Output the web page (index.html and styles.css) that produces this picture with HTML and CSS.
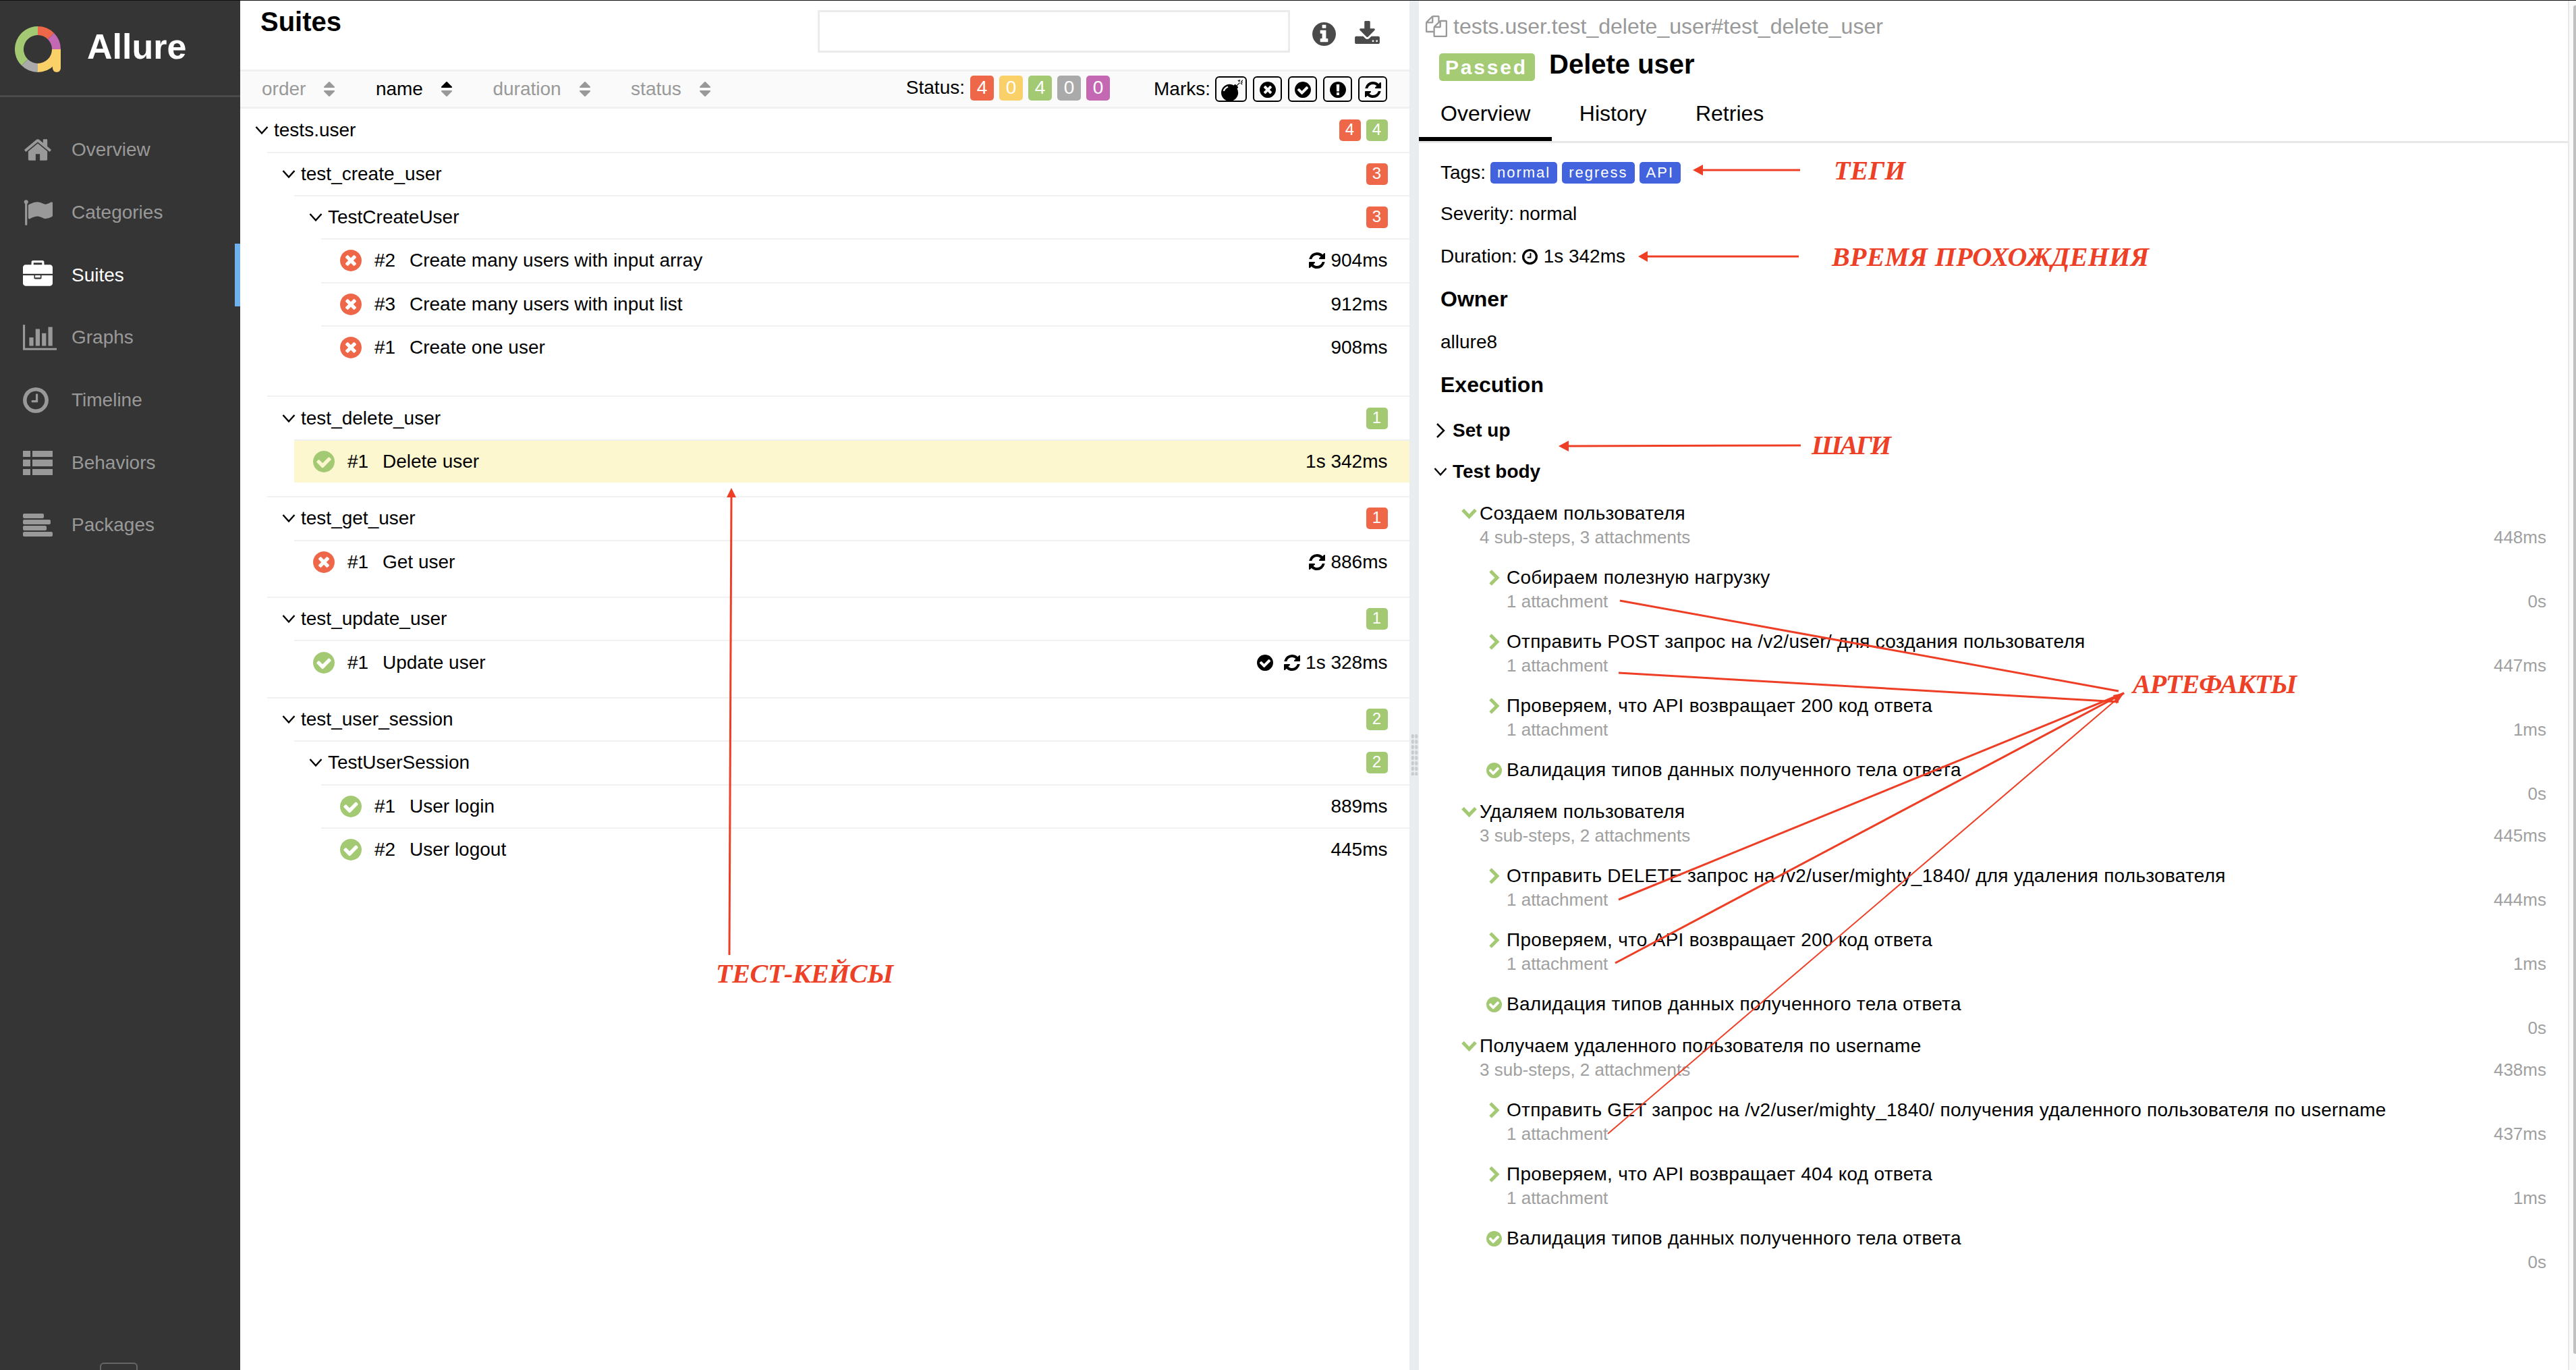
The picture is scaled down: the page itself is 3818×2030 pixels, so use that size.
FILE: index.html
```html
<!DOCTYPE html>
<html lang="en">
<head>
    <meta charset="UTF-8">
    <title>Allure Report</title>
    <link rel="stylesheet" href="styles.css">
</head>
<body>
<svg class="sprite" xmlns="http://www.w3.org/2000/svg">
    <symbol id="i-home" viewBox="0 0 1792 1792"><path d="M1472 992v480q0 26-19 45t-45 19h-384v-384h-256v384h-384q-26 0-45-19t-19-45v-480q0-1 .5-3t.5-3l575-474 575 474q1 2 1 6zm223-69l-62 74q-8 9-21 11h-3q-13 0-21-7l-692-577-692 577q-12 8-24 7-13-2-21-11l-62-74q-8-10-7-23.500t11-21.500l719-599q32-26 76-26t76 26l244 204v-195q0-14 9-23t23-9h192q14 0 23 9t9 23v408l219 182q10 8 11 21.500t-7 23.500z"/></symbol>
    <symbol id="i-flag" viewBox="0 0 1792 1792"><path d="M320 256q0 72-64 110v1266q0 13-9.500 22.500t-22.500 9.500h-64q-13 0-22.500-9.500t-9.500-22.500v-1266q-64-38-64-110 0-53 37.500-90.500t90.500-37.500 90.500 37.500 37.500 90.500zm1472 64v763q0 25-12.500 38.500t-39.500 27.500q-215 116-369 116-61 0-123.500-22t-108.500-48-115.500-48-142.500-22q-192 0-464 146-17 9-33 9-26 0-45-19t-19-45v-742q0-32 31-55 21-14 79-43 236-120 421-120 107 0 200 29t219 88q38 19 88 19 54 0 117.500-21t110-47 88-47 54.500-21q26 0 45 19t19 45z"/></symbol>
    <symbol id="i-briefcase" viewBox="0 0 1792 1792"><path d="M640 256h512v-128h-512v128zm1152 640v480q0 66-47 113t-113 47h-1472q-66 0-113-47t-47-113v-480h672v160q0 26 19 45t45 19h320q26 0 45-19t19-45v-160h672zm-736 0v128h-320v-128h320zm736-480v384h-1792v-384q0-66 47-113t113-47h352v-160q0-40 28-68t68-28h576q40 0 68 28t28 68v160h352q66 0 113 47t47 113z"/></symbol>
    <symbol id="i-chart" viewBox="0 0 2048 1792"><path d="M640 896v512h-256v-512h256zm384-512v1024h-256v-1024h256zm1024 1152v128h-2048v-1536h128v1408h1920zm-640-896v768h-256v-768h256zm384-384v1152h-256v-1152h256z"/></symbol>
    <symbol id="i-clock" viewBox="128 128 1536 1536"><path d="M1024 544v448q0 14-9 23t-23 9h-320q-14 0-23-9t-9-23v-64q0-14 9-23t23-9h224v-352q0-14 9-23t23-9h64q14 0 23 9t9 23zm416 352q0-148-73-273t-198-198-273-73-273 73-198 198-73 273 73 273 198 198 273 73 273-73 198-198 73-273zm224 0q0 209-103 385.500t-279.500 279.500-385.500 103-385.500-103-279.500-279.500-103-385.500 103-385.500 279.500-279.500 385.500-103 385.500 103 279.500 279.500 103 385.500z"/></symbol>
    <symbol id="i-list" viewBox="0 0 44 36"><rect y="0" width="11" height="9"/><rect x="14" y="0" width="30" height="9"/><rect y="13" width="11" height="10"/><rect x="14" y="13" width="30" height="10"/><rect y="27" width="11" height="9"/><rect x="14" y="27" width="30" height="9"/></symbol>
    <symbol id="i-packages" viewBox="0 0 44 34"><rect width="31" height="7" rx="2"/><rect y="9" width="41" height="7" rx="2"/><rect y="18" width="35" height="7" rx="2"/><rect y="27" width="44" height="7" rx="2"/></symbol>
    <symbol id="i-cross" viewBox="128 128 1536 1536"><path d="M1277 1122q0-26-19-45l-181-181 181-181q19-19 19-45 0-27-19-46l-90-90q-19-19-46-19-26 0-45 19l-181 181-181-181q-19-19-45-19-27 0-46 19l-90 90q-19 19-19 46 0 26 19 45l181 181-181 181q-19 19-19 45 0 27 19 46l90 90q19 19 46 19 26 0 45-19l181-181 181 181q19 19 45 19 27 0 46-19l90-90q19-19 19-46zm387-226q0 209-103 385.500t-279.500 279.500-385.500 103-385.500-103-279.500-279.500-103-385.500 103-385.500 279.500-279.500 385.500-103 385.500 103 279.500 279.500 103 385.500z"/></symbol>
    <symbol id="i-check" viewBox="128 128 1536 1536"><path d="M1412 734q0-28-18-46l-91-90q-19-19-45-19t-45 19l-408 407-226-226q-19-19-45-19t-45 19l-91 90q-18 18-18 46 0 27 18 45l362 362q19 19 45 19 27 0 46-19l543-543q18-18 18-45zm252 162q0 209-103 385.500t-279.500 279.500-385.500 103-385.500-103-279.500-279.500-103-385.500 103-385.500 279.500-279.500 385.500-103 385.500 103 279.500 279.500 103 385.500z"/></symbol>
    <symbol id="i-alert" viewBox="128 128 1536 1536"><path d="M896 128q209 0 385.500 103t279.500 279.500 103 385.500-103 385.500-279.500 279.500-385.500 103-385.500-103-279.500-279.500-103-385.500 103-385.500 279.500-279.500 385.500-103zm128 1247v-190q0-14-9-23.500t-22-9.500h-192q-13 0-23 10t-10 23v190q0 13 10 23t23 10h192q13 0 22-9.500t9-23.500zm-2-344l18-621q0-12-10-18-10-8-24-8h-220q-14 0-24 8-10 6-10 18l17 621q0 10 10 17.500t24 7.500h185q14 0 23.500-7.500t10.500-17.500z"/></symbol>
    <symbol id="i-retry" viewBox="128 128 1536 1536"><path d="M1639 1056q0 5-1 7-64 268-268 434.500t-478 166.500q-146 0-282.500-55t-243.500-157l-129 129q-19 19-45 19t-45-19-19-45v-448q0-26 19-45t45-19h448q26 0 45 19t19 45-19 45l-137 137q71 66 161 102t187 36q134 0 250-65t186-179q11-17 53-117 8-23 30-23h192q13 0 22.500 9.500t9.500 22.500zm25-800v448q0 26-19 45t-45 19h-448q-26 0-45-19t-19-45 19-45l138-138q-148-137-349-137-134 0-250 65t-186 179q-11 17-53 117-8 23-30 23h-199q-13 0-22.500-9.500t-9.500-22.500v-7q65-268 270-434.500t480-166.500q146 0 284 55.500t245 156.500l130-129q19-19 45-19t45 19 19 45z"/></symbol>
    <symbol id="i-bomb" viewBox="0 0 1792 1792"><path d="M571 589q-10-25-34-35t-49 0q-108 44-191 127t-127 191q-10 25 0 49t35 34q13 5 24 5 42 0 60-40 34-84 98.500-148.500t148.500-98.500q25-11 35-35t0-49zm942-356l46 46-244 243 68 68q19 19 19 45.500t-19 45.500l-64 64q89 161 89 343 0 143-55.500 273.500t-150 225-225 150-273.500 55.500-273.500-55.500-225-150-150-225-55.500-273.500 55.500-273.500 150-225 225-150 273.500-55.500q182 0 343 89l64-64q19-19 45.500-19t45.500 19l68 68zm8-56q-10 10-22 10-13 0-23-10l-91-90q-9-10-9-23t9-23q10-9 23-9t23 9l90 91q10 9 10 22.500t-10 22.500zm230 230q-11 9-23 9t-23-9l-90-91q-10-9-10-22.500t10-22.500q9-10 22.500-10t22.500 10l91 90q9 10 9 23t-9 23zm41-183q0 14-9 23t-23 9h-96q-14 0-23-9t-9-23 9-23 23-9h96q14 0 23 9t9 23zm-228-228v96q0 14-9 23t-23 9-23-9-9-23v-96q0-14 9-23t23-9 23 9 9 23zm222 92l-91 90q-10 10-22 10-13 0-23-10-10-9-10-22.500t10-22.500l90-91q10-9 23-9t23 9q9 10 9 23t-9 23z"/></symbol>
    <symbol id="i-info" viewBox="128 128 1536 1536"><path d="M1152 1376v-160q0-14-9-23t-23-9h-96v-512q0-14-9-23t-23-9h-320q-14 0-23 9t-9 23v160q0 14 9 23t23 9h96v320h-96q-14 0-23 9t-9 23v160q0 14 9 23t23 9h448q14 0 23-9t9-23zm-128-896v-160q0-14-9-23t-23-9h-192q-14 0-23 9t-9 23v160q0 14 9 23t23 9h192q14 0 23-9t9-23zm640 416q0 209-103 385.500t-279.500 279.500-385.500 103-385.500-103-279.500-279.500-103-385.500 103-385.500 279.500-279.500 385.500-103 385.500 103 279.500 279.500 103 385.500z"/></symbol>
    <symbol id="i-download" viewBox="64 0 1664 1536"><path d="M1344 1344q0-26-19-45t-45-19-45 19-19 45 19 45 45 19 45-19 19-45zm256 0q0-26-19-45t-45-19-45 19-19 45 19 45 45 19 45-19 19-45zm128-224v320q0 40-28 68t-68 28h-1472q-40 0-68-28t-28-68v-320q0-40 28-68t68-28h465l135 136q58 56 136 56t136-56l136-136h464q40 0 68 28t28 68zm-325-569q17 41-14 70l-448 448q-18 19-45 19t-45-19l-448-448q-31-29-14-70 17-39 59-39h256v-448q0-26 19-45t45-19h256q26 0 45 19t19 45v448h256q42 0 59 39z"/></symbol>
    <symbol id="i-copy" viewBox="0 0 1792 1792"><path d="M1696 384q40 0 68 28t28 68v1216q0 40-28 68t-68 28h-960q-40 0-68-28t-28-68v-288h-544q-40 0-68-28t-28-68v-672q0-40 20-88t48-76l408-408q28-28 76-48t88-20h416q40 0 68 28t28 68v328q68-40 128-40h416zm-544 213l-299 299h299v-299zm-640-384l-299 299h299v-299zm196 647l316-316v-416h-384v416q0 40-28 68t-68 28h-416v640h512v-256q0-40 20-88t48-76zm956 804v-1152h-384v416q0 40-28 68t-68 28h-416v640h896z"/></symbol>
    <symbol id="i-sort-up" viewBox="384 192 1024 1408"><path d="M1408 704q0 26-19 45t-45 19h-896q-26 0-45-19t-19-45 19-45l448-448q19-19 45-19t45 19l448 448q19 19 19 45z"/></symbol>
    <symbol id="i-sort-down" viewBox="384 192 1024 1408"><path d="M1408 1088q0 26-19 45l-448 448q-19 19-45 19t-45-19l-448-448q-19-19-19-45t19-45 45-19h896q26 0 45 19t19 45z"/></symbol>
    <symbol id="i-open" viewBox="0 0 20 14"><polyline points="1.5,2 10,11.500 18.500,2" fill="none" stroke="currentColor" stroke-width="2.500"/></symbol>
    <symbol id="i-closed" viewBox="0 0 14 24"><polyline points="2,2 12,12 2,22" fill="none" stroke="currentColor" stroke-width="2.500"/></symbol>
    <symbol id="i-green-open" viewBox="0 0 23 16"><polyline points="2,2.500 11.500,12.500 21,2.500" fill="none" stroke="currentColor" stroke-width="5"/></symbol>
    <symbol id="i-green-closed" viewBox="0 0 17 24"><polyline points="3,2 13,12 3,22" fill="none" stroke="currentColor" stroke-width="5"/></symbol>
</svg>

<aside class="sidebar">
    <div class="brand">
        <svg class="brand-logo" viewBox="0 0 68 68">
            <path d="M34 6.500A27.500 27.500 0 0 1 53.450 14.550" fill="none" stroke="#ee6749" stroke-width="13"/>
            <path d="M53.450 14.550A27.500 27.500 0 0 1 61.500 34" fill="none" stroke="#c468b4" stroke-width="13"/>
            <path d="M61.500 34A27.500 27.500 0 0 1 34 61.500" fill="none" stroke="#fad168" stroke-width="13"/>
            <path d="M68 34V62a6 6 0 0 1-12 0V34z" fill="#fad168"/>
            <path d="M34 61.500A27.500 27.500 0 0 1 14.550 53.450" fill="none" stroke="#aaaaaa" stroke-width="13"/>
            <path d="M14.550 53.450A27.500 27.500 0 0 1 34 6.500" fill="none" stroke="#a3c973" stroke-width="13"/>
        </svg>
        <span class="brand-name">Allure</span>
    </div>
    <nav class="nav">
        <a class="nav-item"><span class="nav-icon"><svg class="icon-44"><use href="#i-home"/></svg></span>Overview</a>
        <a class="nav-item"><span class="nav-icon"><svg class="icon-44"><use href="#i-flag"/></svg></span>Categories</a>
        <a class="nav-item active"><span class="nav-icon"><svg class="icon-44"><use href="#i-briefcase"/></svg></span>Suites</a>
        <a class="nav-item"><span class="nav-icon"><svg class="icon-chart"><use href="#i-chart"/></svg></span>Graphs</a>
        <a class="nav-item"><span class="nav-icon"><svg class="icon-38"><use href="#i-clock"/></svg></span>Timeline</a>
        <a class="nav-item"><span class="nav-icon"><svg class="icon-list"><use href="#i-list"/></svg></span>Behaviors</a>
        <a class="nav-item"><span class="nav-icon"><svg class="icon-list"><use href="#i-packages"/></svg></span>Packages</a>
    </nav>
    <div class="collapse-btn"></div>
</aside>

<main class="suites">
    <header class="suites-head">
        <h1 class="suites-title">Suites</h1>
        <div class="search-box"></div>
        <svg class="head-info"><use href="#i-info"/></svg>
        <svg class="head-download"><use href="#i-download"/></svg>
    </header>

    <div class="toolbar">
        <span class="sorter">order<svg class="sort-icon"><use href="#i-sort-up"/><use href="#i-sort-down"/></svg></span>
        <span class="sorter current">name<svg class="sort-icon"><use class="sort-on" href="#i-sort-up"/><use href="#i-sort-down"/></svg></span>
        <span class="sorter">duration<svg class="sort-icon"><use href="#i-sort-up"/><use href="#i-sort-down"/></svg></span>
        <span class="sorter">status<svg class="sort-icon"><use href="#i-sort-up"/><use href="#i-sort-down"/></svg></span>
        <div class="filter filter-status">
            Status:
            <span class="count big failed">4</span>
            <span class="count big broken">0</span>
            <span class="count big passed">4</span>
            <span class="count big skipped">0</span>
            <span class="count big unknown">0</span>
        </div>
        <div class="filter filter-marks">
            Marks:
            <span class="mark mark-wide"><svg class="mark-bomb"><use href="#i-bomb"/></svg></span>
            <span class="mark"><svg><use href="#i-cross"/></svg></span>
            <span class="mark"><svg><use href="#i-check"/></svg></span>
            <span class="mark"><svg><use href="#i-alert"/></svg></span>
            <span class="mark"><svg><use href="#i-retry"/></svg></span>
        </div>
    </div>

    <div class="tree">
        <div class="group">
            <div class="row head root"><svg class="tree-arrow"><use href="#i-open"/></svg><span class="row-name">tests.user</span><span class="count failed">4</span><span class="count passed">4</span></div>
            <div class="children">
                <div class="group">
                    <div class="row head"><svg class="tree-arrow"><use href="#i-open"/></svg><span class="row-name">test_create_user</span><span class="count failed">3</span></div>
                    <div class="children">
                        <div class="group">
                            <div class="row head"><svg class="tree-arrow"><use href="#i-open"/></svg><span class="row-name">TestCreateUser</span><span class="count failed">3</span></div>
                            <div class="children">
                                <div class="row leaf"><svg class="status-icon failed-icon"><use href="#i-cross"/></svg><span class="row-num">#2</span><span class="row-name">Create many users with input array</span><svg class="row-mark"><use href="#i-retry"/></svg><span class="row-time">904ms</span></div>
                                <div class="row leaf"><svg class="status-icon failed-icon"><use href="#i-cross"/></svg><span class="row-num">#3</span><span class="row-name">Create many users with input list</span><span class="row-time">912ms</span></div>
                                <div class="row leaf"><svg class="status-icon failed-icon"><use href="#i-cross"/></svg><span class="row-num">#1</span><span class="row-name">Create one user</span><span class="row-time">908ms</span></div>
                            </div>
                        </div>
                    </div>
                </div>

                <div class="group">
                    <div class="row head"><svg class="tree-arrow"><use href="#i-open"/></svg><span class="row-name">test_delete_user</span><span class="count passed">1</span></div>
                    <div class="children">
                        <div class="row leaf selected"><svg class="status-icon passed-icon"><use href="#i-check"/></svg><span class="row-num">#1</span><span class="row-name">Delete user</span><span class="row-time">1s 342ms</span></div>
                    </div>
                </div>

                <div class="group">
                    <div class="row head"><svg class="tree-arrow"><use href="#i-open"/></svg><span class="row-name">test_get_user</span><span class="count failed">1</span></div>
                    <div class="children">
                        <div class="row leaf"><svg class="status-icon failed-icon"><use href="#i-cross"/></svg><span class="row-num">#1</span><span class="row-name">Get user</span><svg class="row-mark"><use href="#i-retry"/></svg><span class="row-time">886ms</span></div>
                    </div>
                </div>

                <div class="group">
                    <div class="row head"><svg class="tree-arrow"><use href="#i-open"/></svg><span class="row-name">test_update_user</span><span class="count passed">1</span></div>
                    <div class="children">
                        <div class="row leaf"><svg class="status-icon passed-icon"><use href="#i-check"/></svg><span class="row-num">#1</span><span class="row-name">Update user</span><svg class="row-mark row-mark-gap"><use href="#i-check"/></svg><svg class="row-mark"><use href="#i-retry"/></svg><span class="row-time">1s 328ms</span></div>
                    </div>
                </div>

                <div class="group">
                    <div class="row head"><svg class="tree-arrow"><use href="#i-open"/></svg><span class="row-name">test_user_session</span><span class="count passed">2</span></div>
                    <div class="children">
                        <div class="group">
                            <div class="row head"><svg class="tree-arrow"><use href="#i-open"/></svg><span class="row-name">TestUserSession</span><span class="count passed">2</span></div>
                            <div class="children">
                                <div class="row leaf"><svg class="status-icon passed-icon"><use href="#i-check"/></svg><span class="row-num">#1</span><span class="row-name">User login</span><span class="row-time">889ms</span></div>
                                <div class="row leaf"><svg class="status-icon passed-icon"><use href="#i-check"/></svg><span class="row-num">#2</span><span class="row-name">User logout</span><span class="row-time">445ms</span></div>
                            </div>
                        </div>
                    </div>
                </div>
            </div>
        </div>
    </div>
</main>

<div class="gutter"><div class="gutter-dots"></div></div>

<section class="detail">
    <div class="detail-path"><svg class="copy-icon"><use href="#i-copy"/></svg>tests.user.test_delete_user#test_delete_user</div>
    <div class="detail-title"><span class="passed-label">Passed</span><h2 class="detail-name">Delete user</h2></div>
    <div class="tabs">
        <span class="tab active">Overview</span>
        <span class="tab">History</span>
        <span class="tab">Retries</span>
    </div>
    <div class="detail-body">
        <div class="info-line info-tags">Tags:
            <span class="tag">normal</span><span class="tag">regress</span><span class="tag">API</span>
        </div>
        <div class="info-line">Severity: normal</div>
        <div class="info-line">Duration: <svg class="clock-icon"><use href="#i-clock"/></svg> 1s 342ms</div>
        <h3 class="info-head">Owner</h3>
        <div class="info-line">allure8</div>
        <h3 class="info-head exec-head">Execution</h3>

        <div class="stage"><svg class="stage-arrow closed"><use href="#i-closed"/></svg>Set up</div>
        <div class="stage stage-body"><svg class="stage-arrow open"><use href="#i-open"/></svg>Test body</div>

        <div class="steps">
            <div class="step-group">
                <div class="step-title"><svg class="step-open"><use href="#i-green-open"/></svg>Создаем пользователя</div>
                <div class="step-meta"><span>4 sub-steps, 3 attachments</span><span>448ms</span></div>
                <div class="step">
                    <div class="step-title"><svg class="step-closed"><use href="#i-green-closed"/></svg>Собираем полезную нагрузку</div>
                    <div class="step-meta"><span>1 attachment</span><span>0s</span></div>
                </div>
                <div class="step">
                    <div class="step-title"><svg class="step-closed"><use href="#i-green-closed"/></svg>Отправить POST запрос на /v2/user/ для создания пользователя</div>
                    <div class="step-meta"><span>1 attachment</span><span>447ms</span></div>
                </div>
                <div class="step">
                    <div class="step-title"><svg class="step-closed"><use href="#i-green-closed"/></svg>Проверяем, что API возвращает 200 код ответа</div>
                    <div class="step-meta"><span>1 attachment</span><span>1ms</span></div>
                </div>
                <div class="step">
                    <div class="step-title"><svg class="step-done"><use href="#i-check"/></svg>Валидация типов данных полученного тела ответа</div>
                    <div class="step-meta"><span></span><span>0s</span></div>
                </div>
            </div>

            <div class="step-group">
                <div class="step-title"><svg class="step-open"><use href="#i-green-open"/></svg>Удаляем пользователя</div>
                <div class="step-meta"><span>3 sub-steps, 2 attachments</span><span>445ms</span></div>
                <div class="step">
                    <div class="step-title"><svg class="step-closed"><use href="#i-green-closed"/></svg>Отправить DELETE запрос на /v2/user/mighty_1840/ для удаления пользователя</div>
                    <div class="step-meta"><span>1 attachment</span><span>444ms</span></div>
                </div>
                <div class="step">
                    <div class="step-title"><svg class="step-closed"><use href="#i-green-closed"/></svg>Проверяем, что API возвращает 200 код ответа</div>
                    <div class="step-meta"><span>1 attachment</span><span>1ms</span></div>
                </div>
                <div class="step">
                    <div class="step-title"><svg class="step-done"><use href="#i-check"/></svg>Валидация типов данных полученного тела ответа</div>
                    <div class="step-meta"><span></span><span>0s</span></div>
                </div>
            </div>

            <div class="step-group">
                <div class="step-title"><svg class="step-open"><use href="#i-green-open"/></svg>Получаем удаленного пользователя по username</div>
                <div class="step-meta"><span>3 sub-steps, 2 attachments</span><span>438ms</span></div>
                <div class="step">
                    <div class="step-title"><svg class="step-closed"><use href="#i-green-closed"/></svg>Отправить GET запрос на /v2/user/mighty_1840/ получения удаленного пользователя по username</div>
                    <div class="step-meta"><span>1 attachment</span><span>437ms</span></div>
                </div>
                <div class="step">
                    <div class="step-title"><svg class="step-closed"><use href="#i-green-closed"/></svg>Проверяем, что API возвращает 404 код ответа</div>
                    <div class="step-meta"><span>1 attachment</span><span>1ms</span></div>
                </div>
                <div class="step">
                    <div class="step-title"><svg class="step-done"><use href="#i-check"/></svg>Валидация типов данных полученного тела ответа</div>
                    <div class="step-meta"><span></span><span>0s</span></div>
                </div>
            </div>
        </div>
    </div>
</section>

<div class="scrollbar"><div class="scroll-thumb"></div></div>

<!-- red notes drawn on top of the screenshot -->
<svg class="notes-arrows" viewBox="0 0 3818 2030">
    <g class="arrow-line">
        <line x1="2668" y1="252" x2="2520" y2="252"/>
        <line x1="2666" y1="380" x2="2440" y2="380"/>
        <line x1="2669" y1="660" x2="2322" y2="661"/>
        <line x1="1081" y1="1415" x2="1084" y2="735"/>
        <line x1="2401" y1="890" x2="3140" y2="1024"/>
        <line x1="2399" y1="997" x2="3140" y2="1040"/>
        <line x1="2399" y1="1333" x2="3148" y2="1027"/>
        <line x1="2394" y1="1427" x2="3148" y2="1027"/>
        <line class="thin" x1="2383" y1="1680" x2="3148" y2="1027"/>
    </g>
    <g class="arrow-head">
        <polygon points="2509,252 2524,244 2524,260"/>
        <polygon points="2428,380 2442,372 2442,388"/>
        <polygon points="2310,661 2325,653 2325,669"/>
        <polygon points="1084,723 1077,737 1091,737"/>
        <polygon points="3148,1027 3132,1030 3137,1043"/>
    </g>
</svg>
<div class="note note-tags">ТЕГИ</div>
<div class="note note-time">ВРЕМЯ ПРОХОЖДЕНИЯ</div>
<div class="note note-steps">ШАГИ</div>
<div class="note note-cases">ТЕСТ-КЕЙСЫ</div>
<div class="note note-files">АРТЕФАКТЫ</div>
</body>
</html>
```

FILE: styles.css
```css
* {
    box-sizing: border-box;
}

body {
    margin: 0;
    height: 2030px;
    overflow: hidden;
    display: flex;
    position: relative;
    border-top: 1px solid #111;
    font-family: "Liberation Sans", Arial, sans-serif;
    font-size: 28px;
    color: #000;
    background: #fff;
}

svg {
    display: block;
    flex: none;
    fill: currentColor;
}

.sprite {
    display: none;
}

h1, h2, h3 {
    margin: 0;
}

/* sidebar */
.sidebar {
    flex: 0 0 356px;
    display: flex;
    flex-direction: column;
    background: #353535;
    overflow: hidden;
}

.brand {
    height: 143px;
    padding: 38px 0 0 22px;
    display: flex;
    border-bottom: 3px solid #4a4a4a;
}

.brand-logo {
    width: 68px;
    height: 68px;
}

.brand-name {
    margin-left: 39px;
    font-size: 52px;
    line-height: 60px;
    font-weight: bold;
    color: #fff;
}

.nav {
    margin-top: 32px;
}

.nav-item {
    height: 92.700px;
    display: flex;
    align-items: center;
    color: #999;
}

.nav-item.active {
    color: #fff;
    box-shadow: inset -8px 0 0 #6fb0ef;
}

.nav-icon {
    flex: 0 0 106px;
    padding-left: 34px;
}

.icon-44 {
    width: 44px;
    height: 44px;
}

.icon-chart {
    width: 50px;
    height: 44px;
}

.icon-38 {
    width: 38px;
    height: 38px;
}

.icon-list {
    width: 44px;
    height: 36px;
}

.collapse-btn {
    width: 56px;
    height: 40px;
    margin: auto 0 -29px 148px;
    border: 2px solid #666;
    border-radius: 6px;
}

/* suites list */
.suites {
    flex: 0 0 1733px;
    min-width: 0;
}

.suites-head {
    height: 102px;
    padding-left: 30px;
    display: flex;
    align-items: flex-start;
}

.suites-title {
    margin-top: 8px;
    font-size: 40px;
    line-height: 46px;
}

.search-box {
    width: 700px;
    height: 63px;
    margin: 14px 0 0 auto;
    border: 3px solid #e9ebed;
}

.head-info {
    width: 35px;
    height: 35px;
    margin: 32px 0 0 33px;
    color: #4a4a4a;
}

.head-download {
    width: 37px;
    height: 34px;
    margin: 30px 44px 0 28px;
    color: #4a4a4a;
}

.toolbar {
    height: 58px;
    padding: 0 33px 0 32px;
    display: flex;
    align-items: center;
    gap: 60.500px;
    background: #fafafa;
    border-top: 3px solid #eef0f2;
    border-bottom: 3px solid #eef0f2;
    color: #999;
}

.sorter {
    display: flex;
    align-items: center;
    gap: 27px;
}

.sorter.current {
    color: #000;
}

.sort-icon {
    width: 16px;
    height: 22px;
    color: #999;
}

.sort-on {
    color: #000;
}

.filter {
    display: flex;
    align-items: center;
    color: #000;
}

.filter-status {
    gap: 8px;
    margin-left: auto;
    margin-bottom: 4px;
}

.filter-marks {
    gap: 9px;
    margin-left: 4.500px;
}

.count {
    width: 32px;
    height: 32px;
    margin-left: 8px;
    border-radius: 5px;
    font-size: 24px;
    line-height: 30px;
    text-align: center;
    color: #fff;
}

.count.big {
    width: 35px;
    height: 37px;
    margin-left: 0;
    font-size: 28px;
    line-height: 35px;
}

.failed {
    background: #ee6749;
}

.broken {
    background: #fad168;
}

.passed {
    background: #a3c973;
}

.skipped {
    background: #aaa;
}

.unknown {
    background: #c468b4;
}

.mark {
    width: 43px;
    height: 38px;
    padding: 6px 0 0 8px;
    border: 2px solid #000;
    border-radius: 6px;
}

.mark-wide {
    width: 47px;
    margin-left: -2px;
}

.mark svg {
    width: 24px;
    height: 24px;
}

.mark svg.mark-bomb {
    width: 32px;
    height: 32px;
    margin: -3px 0 0 -1px;
}

/* tree */
.row {
    height: 64.400px;
    padding-right: 32.500px;
    display: flex;
    align-items: center;
    border-top: 2px solid #eff1f3;
}

.row.root {
    height: 63.500px;
    border-top: 0;
}

.row-name {
    margin-right: auto;
}

.group {
    padding-bottom: 20px;
}

.tree > .group {
    padding-bottom: 0;
}

.children {
    margin-left: 40px;
}

.head {
    padding-left: 22px;
}

.tree-arrow {
    width: 20px;
    height: 14px;
    margin-right: 8px;
}

.leaf {
    padding-left: 28px;
}

.status-icon {
    width: 32px;
    height: 32px;
    margin-right: 19px;
}

.failed-icon {
    color: #ee6749;
}

.passed-icon {
    color: #a3c973;
}

.row-num {
    flex: 0 0 52px;
}

.selected {
    background: #fdf7d0;
}

.row-mark {
    width: 24px;
    height: 24px;
    margin-right: 8px;
}

.row-mark.row-mark-gap {
    margin-right: 16px;
}

/* gutter between panes */
.gutter {
    flex: 0 0 14px;
    background: #e9edf0;
    padding-top: 1086px;
}

.gutter-dots {
    width: 11px;
    height: 62px;
    margin-left: 2px;
    background-image: radial-gradient(#c9ccce 2px, transparent 2.500px);
    background-size: 5.500px 8px;
}

/* test detail */
.detail {
    flex: 0 0 1703px;
    min-width: 0;
}

.detail-path {
    padding: 15px 0 0 10px;
    display: flex;
    align-items: center;
    gap: 9px;
    font-size: 32px;
    line-height: 46px;
    color: #999;
}

.copy-icon {
    width: 32px;
    height: 32px;
}

.detail-title {
    margin-top: 17px;
    padding-left: 30px;
    display: flex;
    gap: 21px;
}

.passed-label {
    width: 142px;
    height: 41px;
    padding-left: 9px;
    background: #a5cb75;
    border-radius: 5px;
    font-size: 30px;
    font-weight: bold;
    line-height: 41px;
    letter-spacing: 2.800px;
    color: #fff;
}

.detail-name {
    margin-top: -7px;
    font-size: 40px;
    line-height: 46px;
    height: 41px;
}

.tabs {
    margin-top: 8px;
    display: flex;
    gap: 8.500px;
    border-bottom: 3px solid #e6e8ea;
}

.tab {
    height: 81px;
    padding: 22px 32px 0;
    font-size: 32px;
    line-height: 37px;
    border-bottom: 6px solid transparent;
}

.tab.active {
    border-bottom-color: #000;
}

.detail-body {
    padding: 28px 32px 0;
}

.info-line {
    display: flex;
    align-items: center;
    gap: 7px;
    height: 32px;
    line-height: 32px;
    margin-bottom: 31px;
}

.info-tags {
    margin-bottom: 29px;
}

.tag {
    height: 32px;
    padding: 0 10px;
    background: #4263dd;
    border-radius: 5px;
    font-size: 22px;
    line-height: 32px;
    letter-spacing: 2px;
    color: #fff;
}

.clock-icon {
    width: 23px;
    height: 23px;
    margin-right: 2px;
}

.info-head {
    margin-bottom: 32px;
    font-size: 32px;
    line-height: 32px;
}

.exec-head {
    margin-bottom: 36px;
}

.stage {
    height: 32px;
    margin-left: -11px;
    display: flex;
    align-items: center;
    font-weight: bold;
    line-height: 32px;
}

.stage-body {
    margin-top: 29px;
}

.stage-arrow.closed {
    width: 14px;
    height: 24px;
    margin: 0 11px 0 4px;
}

.stage-arrow.open {
    width: 20px;
    height: 14px;
    margin: 0 8px 0 1px;
}

.steps {
    margin: 30px 0 0 -11px;
    padding-left: 42px;
}

.step {
    margin: 33px 0 0 40px;
}

.step-title {
    display: flex;
    align-items: center;
    line-height: 32px;
    height: 32px;
    letter-spacing: .27px;
}

.step-meta {
    display: flex;
    justify-content: space-between;
    height: 22px;
    margin: 8px 0 0 27px;
    font-size: 26px;
    line-height: 22px;
    color: #a0a0a0;
}

.step .step-meta {
    margin-left: 27px;
}

.step-open {
    width: 23px;
    height: 16px;
    margin-right: 4px;
    color: #a3c973;
}

.step-closed {
    width: 17px;
    height: 24px;
    margin-right: 10px;
    color: #a3c973;
}

.step-done {
    width: 23px;
    height: 23px;
    margin: 0 7px 0 -3px;
    color: #a3c973;
}

/* fake scrollbar on the right edge */
.scrollbar {
    flex: 0 0 12px;
    padding-top: 7px;
    background: #fafafa;
    border-left: 2px solid #e8e8e8;
}

.scroll-thumb {
    width: 4px;
    height: 1998px;
    margin-left: auto;
    background: #c1c1c1;
    border-radius: 3px 0 0 3px;
}

/* annotations */
.notes-arrows {
    position: absolute;
    left: 0;
    top: -1px;
    width: 3818px;
    height: 2030px;
}

.arrow-line line {
    stroke: #ee3f26;
    stroke-width: 3;
}

.arrow-line line.thin {
    stroke-width: 2;
}

.arrow-head {
    fill: #ee3f26;
}

.note {
    position: absolute;
    font-family: "Liberation Serif", "Times New Roman", serif;
    font-size: 40px;
    font-style: italic;
    font-weight: bold;
    line-height: 46px;
    white-space: nowrap;
    color: #ec4027;
}

.note-tags {
    left: 2718px;
    top: 229px;
}

.note-time {
    left: 2715px;
    top: 357px;
    letter-spacing: .3px;
}

.note-steps {
    left: 2685px;
    top: 636px;
    letter-spacing: -3px;
}

.note-cases {
    left: 1061px;
    top: 1419px;
    letter-spacing: -.3px;
}

.note-files {
    left: 3161px;
    top: 990px;
    letter-spacing: -1px;
}
```
